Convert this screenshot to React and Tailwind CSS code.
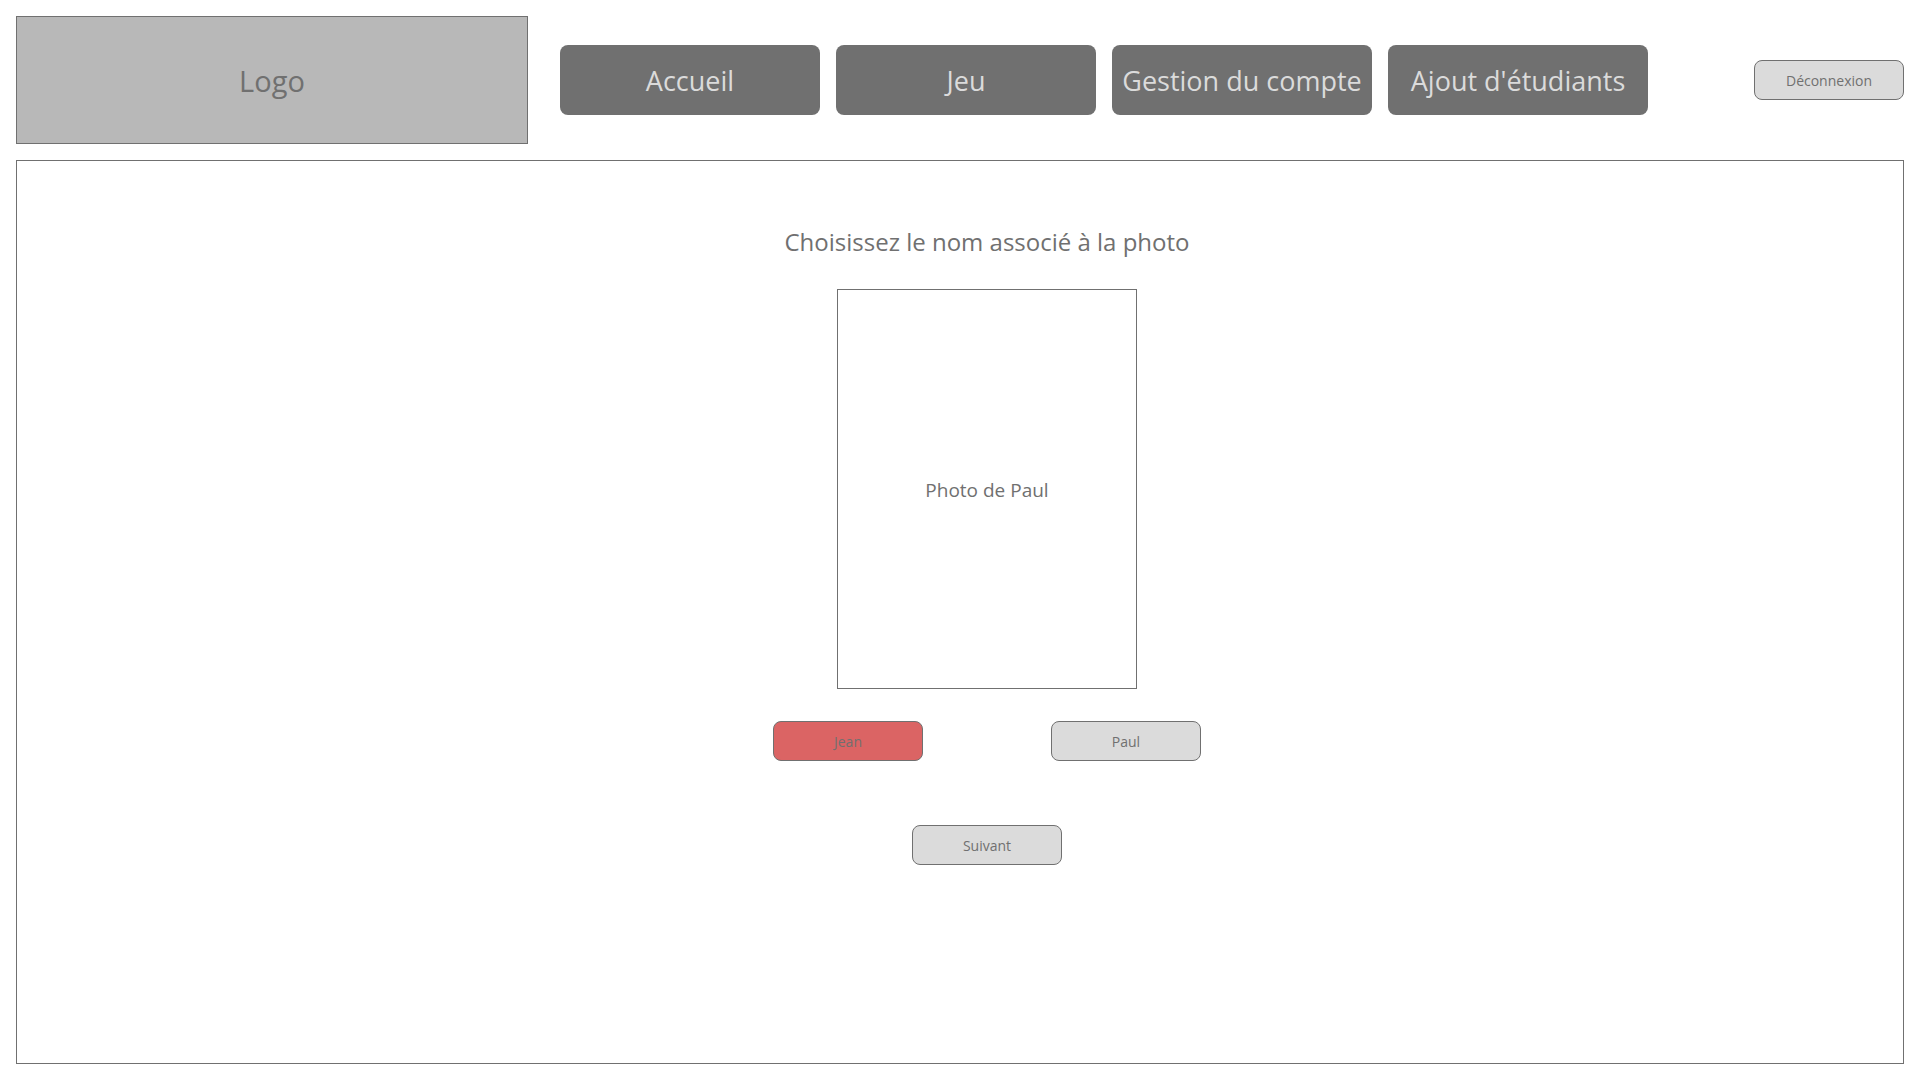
const navItems = ["Accueil", "Jeu", "Gestion du compte", "Ajout d'étudiants"];

function SmallButton({ children, wrong = false }) {
  return (
    <button
      type="button"
      className={`h-10 w-[150px] shrink-0 rounded-lg border border-[#707070] pt-0.5 text-sm text-[#707070] ${
        wrong ? "bg-[#db6464]" : "bg-[#dbdbdb]"
      }`}
    >
      {children}
    </button>
  );
}

export default function App() {
  return (
    <div className="flex min-h-screen flex-col gap-4 bg-white p-4 font-['Open_Sans','Noto_Sans',sans-serif] text-[#707070]">
      <header className="flex items-center gap-8">
        <div className="flex h-32 w-[512px] items-center justify-center border border-[#707070] bg-[#b8b8b8] pt-0.5 text-[29px]">
          Logo
        </div>
        <nav className="flex gap-4">
          {navItems.map((item) => (
            <a
              key={item}
              href="#"
              className="flex h-[70px] w-[260px] items-center justify-center whitespace-nowrap rounded-lg bg-[#707070] pt-0.5 text-[27px] text-[#dbdbdb]"
            >
              {item}
            </a>
          ))}
        </nav>
        <div className="ml-auto">
          <SmallButton>Déconnexion</SmallButton>
        </div>
      </header>

      <main className="flex grow flex-col items-center border border-[#707070] pt-16 pl-[54px]">
        <h1 className="pt-px text-2xl">Choisissez le nom associé à la photo</h1>
        <div className="mt-[31px] flex h-[400px] w-[300px] items-center justify-center border border-[#707070] pt-0.5 text-[19px]">
          Photo de Paul
        </div>
        <div className="mt-8 flex gap-32">
          <SmallButton wrong>Jean</SmallButton>
          <SmallButton>Paul</SmallButton>
        </div>
        <div className="mt-16">
          <SmallButton>Suivant</SmallButton>
        </div>
      </main>
    </div>
  );
}
